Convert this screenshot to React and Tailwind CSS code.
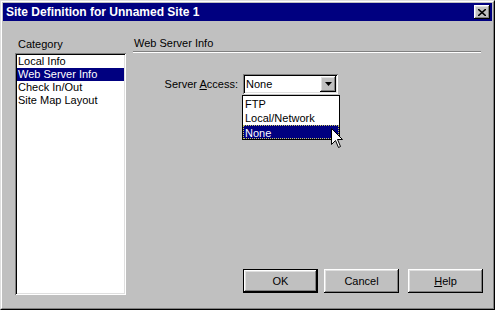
import React from 'react';

const raised = 'shadow-[inset_-1px_-1px_#000,inset_1px_1px_#fff,inset_-2px_-2px_#808080,inset_2px_2px_#dfdfdf]';
const sunken = 'shadow-[inset_1px_1px_#808080,inset_-1px_-1px_#fff,inset_2px_2px_#000,inset_-2px_-2px_#dfdfdf]';

const categories = ['Local Info', 'Web Server Info', 'Check In/Out', 'Site Map Layout'];

const Button = ({ children, primary }) => (
    <div className={`w-[75px] h-[24px] ${primary ? 'border border-black' : ''}`}>
        <div className={`w-full h-full bg-[#c0c0c0] ${raised} flex items-center justify-center text-black`}>
            {children}
        </div>
    </div>
);

const Cursor = () => (
    <svg className="absolute left-[330px] top-[127px]" width="13" height="21" viewBox="0 0 13 21">
        <path d="M0.5 0.5 L0.5 16.5 L4.5 12.5 L7.5 19.5 L9.5 18.5 L6.5 11.5 L11.5 11.5 Z" fill="#fff" stroke="#000" strokeWidth="1" />
    </svg>
);

export default function App() {
    return (
        <div className="relative w-[495px] h-[310px] bg-[#c0c0c0] border border-t-[#dfdfdf] border-l-[#dfdfdf] border-r-black border-b-black text-[11px] leading-[13px] text-black" style={{ fontFamily: '"Liberation Sans", Arial, sans-serif' }}>
            <div className="w-full h-full border border-t-white border-l-white border-r-[#808080] border-b-[#808080] p-px flex flex-col">
                {/* title bar */}
                <div className="h-[18px] bg-[#000080] flex items-center justify-between pl-[3px] pr-[2px]">
                    <span className="text-white font-bold text-[12px]">Site Definition for Unnamed Site 1</span>
                    <div className={`w-[16px] h-[14px] bg-[#c0c0c0] ${raised} flex items-center justify-center`}>
                        <svg width="8" height="7" viewBox="0 0 8 7">
                            <path d="M0 0 L8 7 M8 0 L0 7" stroke="#000" strokeWidth="1.6" />
                        </svg>
                    </div>
                </div>

                <div className="flex flex-1 pt-[15px] pb-[12px] pl-[12px] pr-[11px]">
                    {/* category column */}
                    <div className="w-[111px] flex flex-col">
                        <div className="h-[15px] pl-[3px] leading-[15px] mt-px">Category</div>
                        <div className={`mt-px flex-1 bg-white ${sunken} pt-[2px] px-[2px]`}>
                            {categories.map(c => (
                                <div key={c} className={`h-[13px] leading-[13px] pl-px ${c === 'Web Server Info' ? 'bg-[#000080] text-white' : ''}`}>{c}</div>
                            ))}
                        </div>
                    </div>

                    {/* right panel */}
                    <div className="flex-1 ml-[7px] flex flex-col">
                        <div className="h-[15px] pl-px leading-[15px]">Web Server Info</div>
                        <div className="h-[2px] border-t border-t-[#808080] border-b border-b-white" />

                        <div className="flex items-start mt-[21px]">
                            <div className="w-[106px] h-[20px] flex items-center justify-end pr-px">
                                <span>Server <u>A</u>ccess:</span>
                            </div>
                            <div className="ml-[4px] flex flex-col">
                                <div className={`w-[95px] h-[20px] bg-white ${sunken} flex items-center justify-between pl-[3px] pr-[2px]`}>
                                    <span>None</span>
                                    <div className={`w-[16px] h-[16px] bg-[#c0c0c0] ${raised} flex items-center justify-center`}>
                                        <svg width="7" height="4" viewBox="0 0 7 4">
                                            <path d="M0 0 L7 0 L3.5 4 Z" fill="#000" />
                                        </svg>
                                    </div>
                                </div>
                                <div className="mt-px -ml-px w-[98px] border border-black bg-white pt-px">
                                    <div className="h-[14px] leading-[14px] pl-[2px]">FTP</div>
                                    <div className="h-[14px] leading-[14px] pl-[2px]">Local/Network</div>
                                    <div className="h-[14px] leading-[14px] pl-[1px] bg-[#000080] text-white border border-dotted border-[#c8c860]">None</div>
                                </div>
                            </div>
                        </div>

                        <div className="mt-auto mb-[2px] -mr-[2px] flex justify-end">
                            <Button primary>OK</Button>
                            <div className="ml-[6px]"><Button>Cancel</Button></div>
                            <div className="ml-[9px]"><Button><span><u>H</u>elp</span></Button></div>
                        </div>
                    </div>
                </div>
            </div>
            <Cursor />
        </div>
    );
}
